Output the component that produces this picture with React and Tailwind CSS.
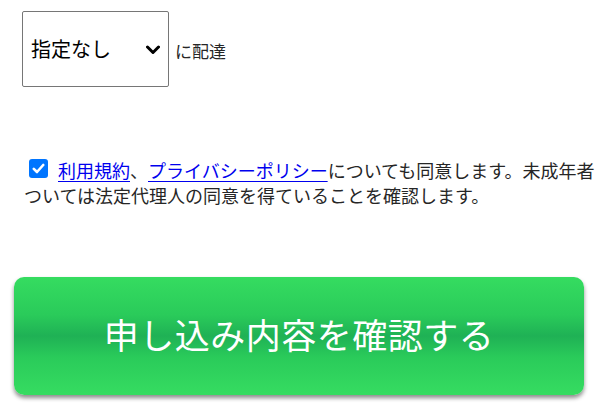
export default function App() {
  return (
    <div className="w-[598px] h-[414px] bg-white overflow-hidden font-['Noto_Sans_CJK_JP',sans-serif] text-[#262626]">
      <div className="pl-[22px] pt-[11px] flex items-center">
        <div className="w-[147px] h-[76px] border border-[#767676] rounded-[2px] flex items-center justify-between pl-[8px] pr-[8px]">
          <span className="text-[20px] leading-none text-black">指定なし</span>
          <svg width="14" height="10" viewBox="0 0 14 10" className="mt-[1px]">
            <polyline points="1.5,2 7,7.5 12.5,2" fill="none" stroke="#000" strokeWidth="3" strokeLinecap="round" strokeLinejoin="round" />
          </svg>
        </div>
        <span className="ml-[6px] text-[17px] leading-none mt-[2px]">に配達</span>
      </div>

      <div className="mt-[71px] pl-[24px] text-[18px] leading-[25px] whitespace-nowrap">
        <div className="flex items-center">
          <span className="ml-[5px] mr-[10px] w-[19px] h-[19px] rounded-[3px] bg-[#0075ff] flex items-center justify-center -mt-[4px]">
            <svg width="13" height="11" viewBox="0 0 13 11">
              <polyline points="1.8,5.8 5,9 11.2,2" fill="none" stroke="#fff" strokeWidth="2.6" strokeLinecap="round" strokeLinejoin="round" />
            </svg>
          </span>
          <span>
            <a className="text-[#0000ee] underline underline-offset-[3px]">利用規約</a>、<a className="text-[#0000ee] underline underline-offset-[3px]">プライバシーポリシー</a>についても同意します。未成年者
          </span>
        </div>
        <div>ついては法定代理人の同意を得ていることを確認します。</div>
      </div>

      <div className="mt-[69px] ml-[14px] w-[570px] h-[118px] rounded-[10px] shadow-[0_3px_4px_rgba(0,0,0,0.45)] bg-[linear-gradient(to_bottom,#35dc60_0%,#2acb5a_32%,#1fb155_50%,#2acb5a_68%,#36dc61_100%)] flex items-center justify-center pb-[6px]">
        <span className="text-white text-[35px] leading-none tracking-[0.5px]">申し込み内容を確認する</span>
      </div>
    </div>
  );
}
